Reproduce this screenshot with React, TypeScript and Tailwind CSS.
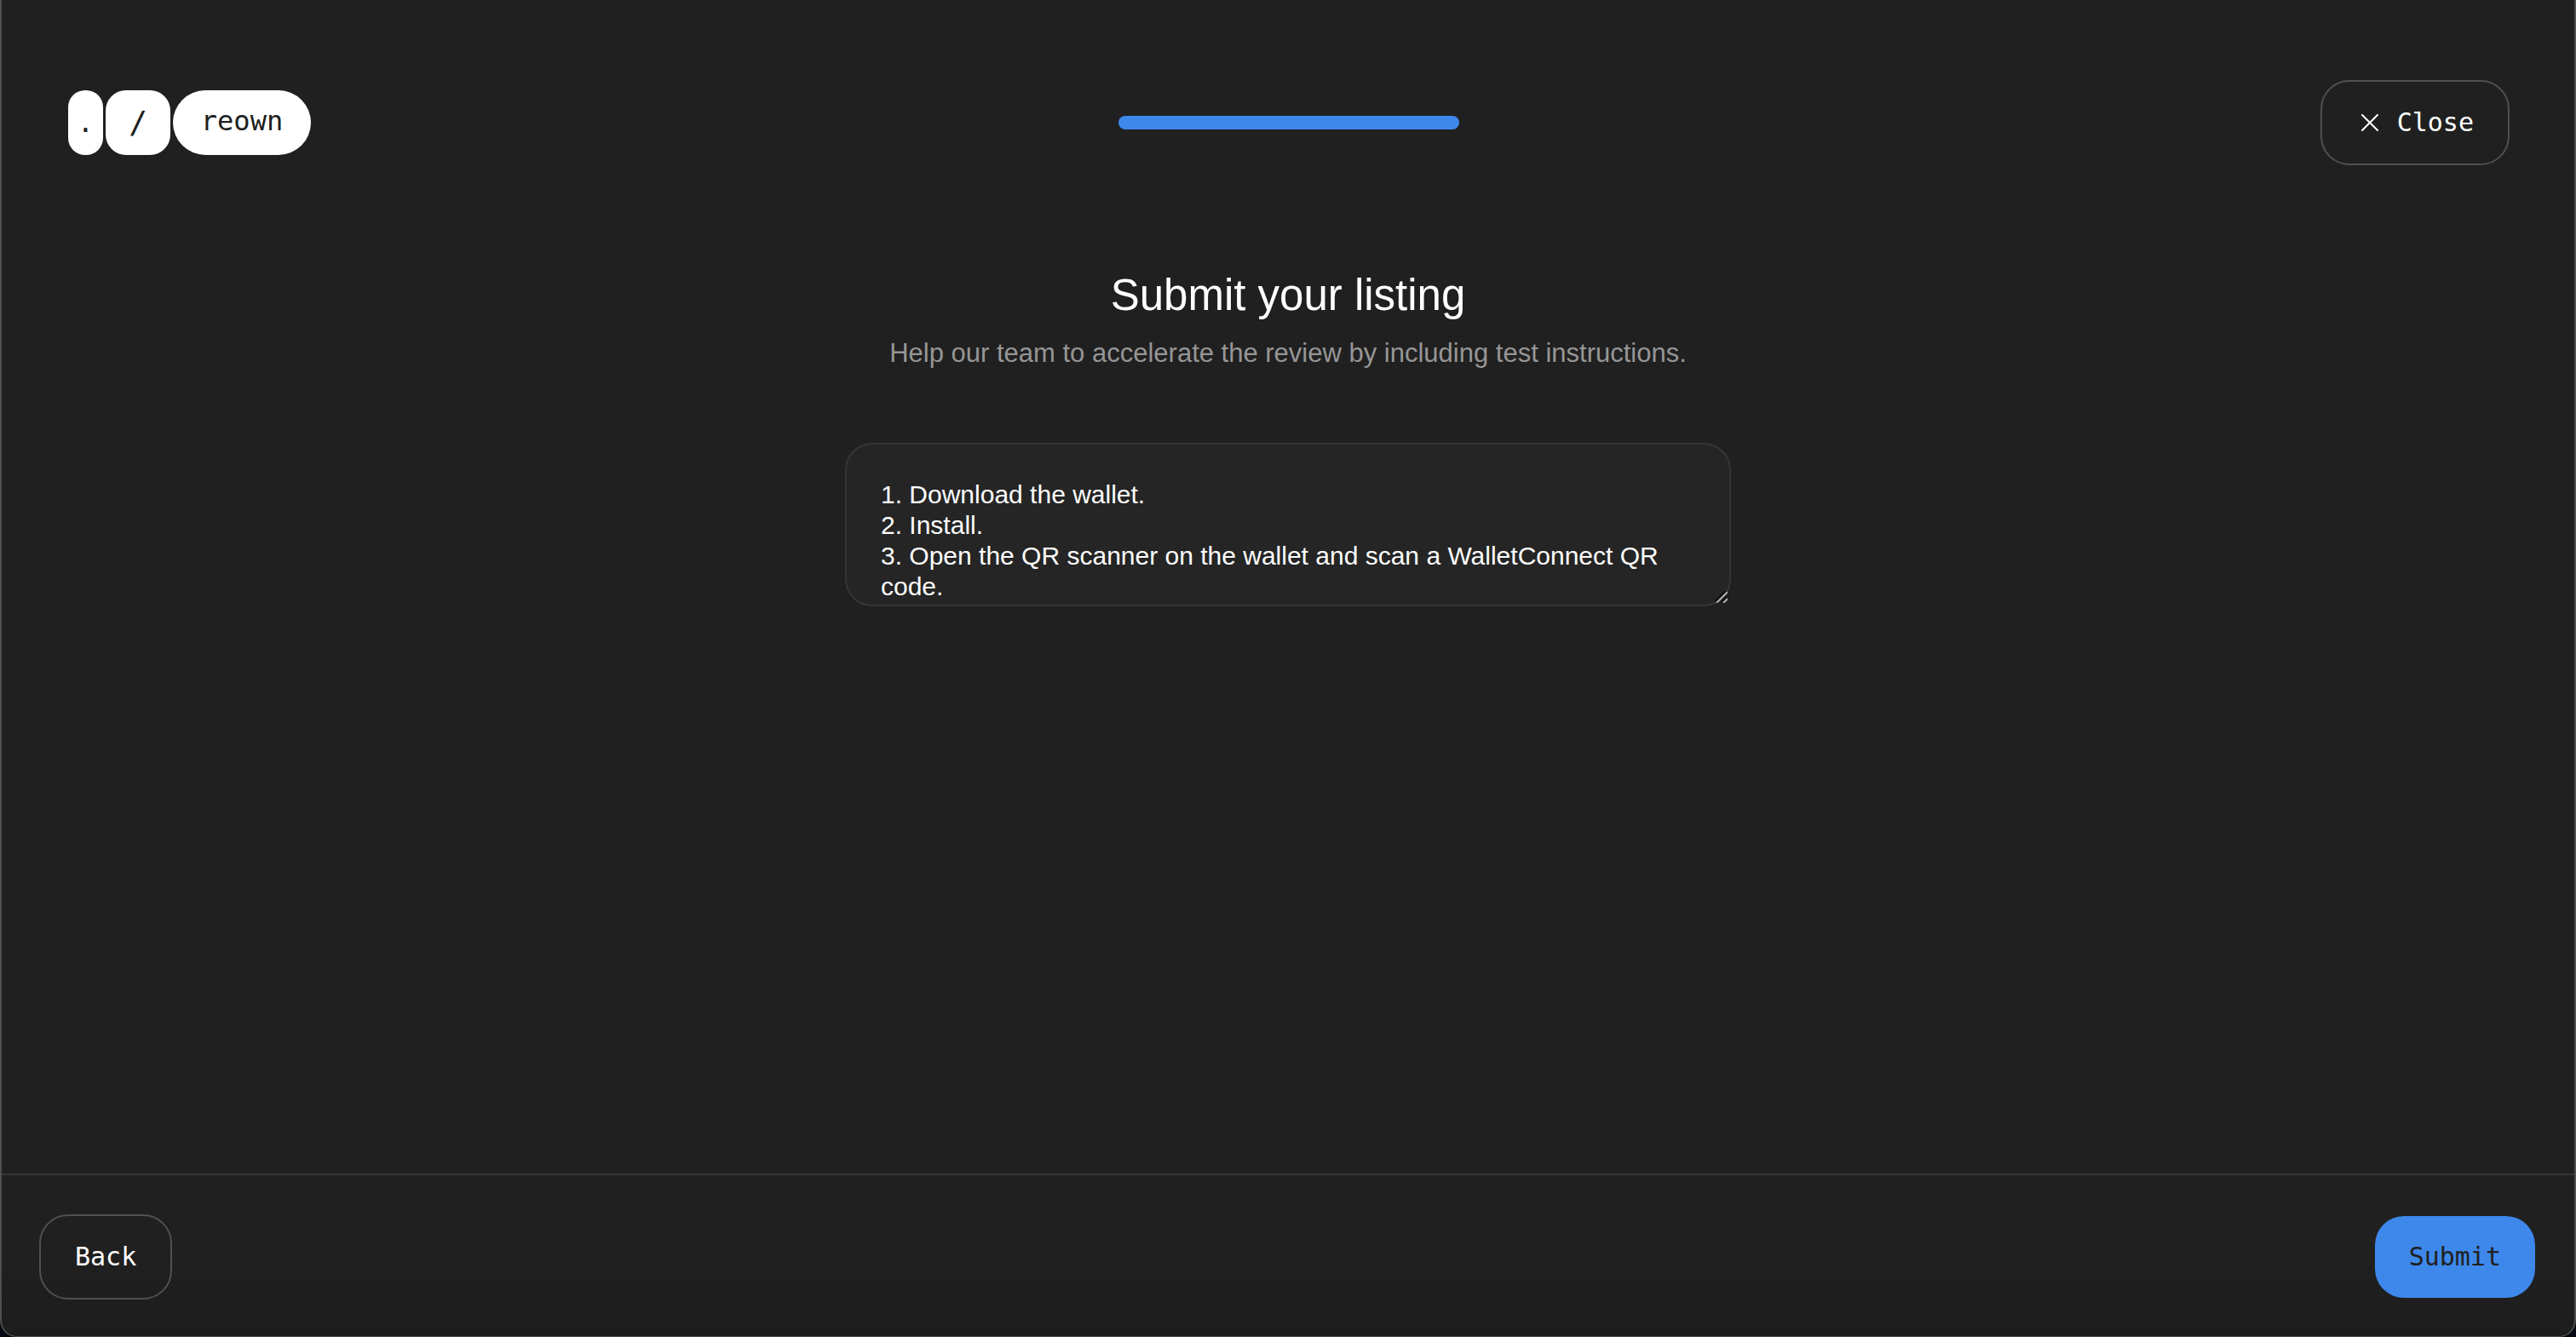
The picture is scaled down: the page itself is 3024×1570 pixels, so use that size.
import React from "react";

const instructions = `1. Download the wallet.
2. Install.
3. Open the QR scanner on the wallet and scan a WalletConnect QR code.`;

function Logo() {
  return (
    <a
      href="#"
      aria-label="reown"
      className="flex h-[76px] gap-[3px] justify-self-start font-['DejaVu_Sans_Mono',monospace] text-[32px] leading-9 text-[#202020]"
    >
      <span className="flex w-[41px] items-center justify-center rounded-[20px] bg-white">.</span>
      <span className="flex w-[76px] items-center justify-center rounded-3xl bg-white text-[36px]">/</span>
      <span className="flex w-[162px] items-center justify-center rounded-full bg-white pb-1">reown</span>
    </a>
  );
}

function CloseIcon() {
  return (
    <svg width="20" height="20" viewBox="0 0 20 20" fill="none" stroke="currentColor" strokeWidth="2" strokeLinecap="round" aria-hidden="true">
      <path d="M1 1l18 18M19 1L1 19" />
    </svg>
  );
}

function ResizeGrip() {
  return (
    <svg
      className="pointer-events-none absolute right-1 bottom-1"
      width="14"
      height="14"
      viewBox="0 0 14 14"
      fill="none"
      aria-hidden="true"
    >
      <path d="M0 13L13 0M8 13L13 8" stroke="#111111" strokeWidth="4" />
      <path d="M1 14L14 1M9 14L14 9" stroke="#b4b4b4" strokeWidth="2" />
    </svg>
  );
}

export default function App() {
  return (
    <div className="min-h-screen bg-[#050a12]">
      <div className="flex min-h-screen flex-col rounded-b-[20px] border-x-2 border-b border-[#4f4f4f] bg-[#202020] font-['Liberation_Sans',Arial,sans-serif] text-white">
        <header className="grid grid-cols-[1fr_400px_1fr] items-center pt-[94px] pr-[76px] pl-[78px]">
          <Logo />
          <div
            role="progressbar"
            aria-label="Progress"
            aria-valuenow={100}
            aria-valuemin={0}
            aria-valuemax={100}
            className="h-4 rounded-full bg-[#3e88eb]"
          />
          <button
            type="button"
            className="flex h-[100px] items-center gap-[22px] justify-self-end rounded-[34px] border-2 border-[#505050] pr-10 pl-[46px] font-['DejaVu_Sans_Mono',monospace] text-[30px] leading-9"
          >
            <CloseIcon />
            Close
          </button>
        </header>

        <main className="flex flex-1 flex-col items-center pt-[121px]">
          <h1 className="text-[51px] leading-[64px]">Submit your listing</h1>
          <label htmlFor="instructions" className="mt-4 text-[31px] leading-10 text-[#969696]">
            Help our team to accelerate the review by including test instructions.
          </label>
          <div className="relative mt-[85px] w-full max-w-[1040px]">
            <textarea
              id="instructions"
              defaultValue={instructions}
              className="block h-48 w-full resize-none rounded-[32px] border-2 border-[#363636] bg-[#252525] px-10 pt-[41px] text-[30px] leading-9 text-white outline-none [scrollbar-width:none]"
            />
            <ResizeGrip />
          </div>
        </main>

        <footer className="flex items-center justify-between rounded-b-[20px] border-t-2 border-[#363636] bg-linear-to-b from-[#202020] from-50% to-[#1d1d1d] pt-[46px] pr-[46px] pb-[43px] pl-[44px]">
          <button
            type="button"
            className="h-[100px] rounded-[34px] border-2 border-[#505050] px-10 font-['DejaVu_Sans_Mono',monospace] text-[30px] leading-9"
          >
            Back
          </button>
          <button
            type="button"
            className="h-24 rounded-[34px] bg-[#3e88eb] px-10 font-['DejaVu_Sans_Mono',monospace] text-[30px] leading-9 text-[#202020]"
          >
            Submit
          </button>
        </footer>
      </div>
    </div>
  );
}
